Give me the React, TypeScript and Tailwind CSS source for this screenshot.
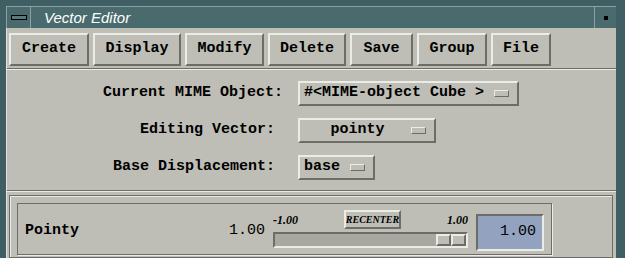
import React from "react";

const mono = { fontFamily: '"Liberation Mono", "Courier New", monospace' };
const serif = { fontFamily: '"Liberation Serif", "Times New Roman", serif' };

const raised =
  "border-2 border-t-[#ecece6] border-l-[#ecece6] border-b-[#6c6c68] border-r-[#6c6c68]";
const sunken =
  "border-2 border-t-[#6c6c68] border-l-[#6c6c68] border-b-[#ecece6] border-r-[#ecece6]";

function ToolButton({ label, width }: { label: string; width: string }) {
  return (
    <div
      className={`${raised} ${width} h-[33px] flex items-center justify-center text-[15px] font-bold text-black bg-[#bebeb6]`}
      style={mono}
    >
      {label}
    </div>
  );
}

function Indicator() {
  return <div className="w-[15px] h-[7px] border-[1.5px] border-t-[#ecece6] border-l-[#ecece6] border-b-[#6c6c68] border-r-[#6c6c68] bg-[#bebeb6]" />;
}

function OptionRow({
  label,
  value,
  width,
  labelPad,
  center,
}: {
  label: string;
  value: string;
  width: string;
  labelPad: string;
  center?: boolean;
}) {
  return (
    <div className="flex items-center">
      <div className={`w-[276px] text-right text-[15px] font-bold ${labelPad}`} style={mono}>
        {label}
      </div>
      <div
        className={`${raised} ${width} ml-[15px] h-[25px] flex items-center pl-[4px] pr-[8px] text-[15px] font-bold`}
        style={mono}
      >
        <span className={center ? "flex-1 text-center" : "flex-1"}>{value}</span>
        <Indicator />
      </div>
    </div>
  );
}

export default function App() {
  return (
    <div className="w-[625px] h-[258px] overflow-hidden bg-[#3f5f64] pl-[6px] pr-[9px] pt-[6px] flex flex-col">
      {/* title bar */}
      <div className="h-[22px] flex border-t border-l border-t-[#8aa0a2] border-l-[#8aa0a2] bg-[#4a6b6e]">
        <div className="w-[24px] flex items-center justify-center border-r border-r-[#8aa0a2]">
          <div className="w-[16px] h-[5px] border border-black bg-[#5a7a7c]" />
        </div>
        <div
          className="flex-1 pl-[13px] text-white italic text-[15px] leading-[21px]"
          style={{ fontFamily: '"Liberation Sans", Arial, sans-serif' }}
        >
          Vector Editor
        </div>
        <div className="w-[22px] flex items-center justify-center border-l border-l-[#8aa0a2]">
          <div className="w-[4px] h-[4px] bg-black" />
        </div>
      </div>

      {/* body */}
      <div className="flex-1 bg-[#bebeb6] flex flex-col border-l border-l-[#e4e4dc]">
        <div className="flex gap-[4px] pl-[2px] pt-[5px]">
          <ToolButton label="Create" width="w-[80px]" />
          <ToolButton label="Display" width="w-[88px]" />
          <ToolButton label="Modify" width="w-[79px]" />
          <ToolButton label="Delete" width="w-[78px]" />
          <ToolButton label="Save" width="w-[63px]" />
          <ToolButton label="Group" width="w-[70px]" />
          <ToolButton label="File" width="w-[60px]" />
        </div>
        <div className="mt-[2px] h-[2px] border-t border-b border-t-[#6c6c68] border-b-[#ecece6]" />

        <div className="flex flex-col gap-[12px] pt-[11px]">
          <OptionRow label="Current MIME Object:" value="#<MIME-object Cube >" width="w-[221px]" labelPad="pr-0" />
          <OptionRow label="Editing Vector:" value="pointy" width="w-[138px]" labelPad="pr-[8px]" center />
          <OptionRow label="Base Displacement:" value="base" width="w-[77px]" labelPad="pr-[8px]" />
        </div>

        <div className="mt-[10px] h-[2px] border-t border-b border-t-[#6c6c68] border-b-[#ecece6]" />

        {/* slider panel */}
        <div className="ml-[2px] mr-[3px] mt-[3px] flex-1 border border-[#6c6c68] shadow-[inset_1px_1px_0_#ecece6] pl-[7px] pt-[7px]">
          <div className="w-[535px] h-[52px] border border-[#6c6c68] shadow-[1px_1px_0_#ecece6] flex items-center pl-[7px]">
            <div className="w-[240px] flex items-center justify-between pt-[5px]">
              <span className="text-[15px] font-bold" style={mono}>Pointy</span>
              <span className="text-[15px]" style={mono}>1.00</span>
            </div>
            <div className="ml-[8px] w-[195px] flex flex-col">
              <div className="flex items-end justify-between h-[22px]">
                <span className="text-[12px] font-bold italic leading-none mb-[6px]" style={serif}>-1.00</span>
                <div
                  className={`${raised} h-[19px] w-[57px] flex items-center justify-center text-[10px] font-bold italic leading-none mb-[3px]`}
                  style={serif}
                >
                  RECENTER
                </div>
                <span className="text-[12px] font-bold italic leading-none mb-[6px]" style={serif}>1.00</span>
              </div>
              <div className={`${sunken} h-[16px] bg-[#a8a8a0] flex justify-end`}>
                <div className={`w-[15px] ${raised} bg-[#bebeb6]`} />
                <div className={`w-[15px] ${raised} bg-[#bebeb6]`} />
              </div>
            </div>
            <div
              className={`${sunken} ml-[8px] w-[68px] h-[37px] mt-[7px] bg-[#93a3bf] flex items-center justify-end pr-[6px] text-[15px]`}
              style={mono}
            >
              1.00
            </div>
          </div>
        </div>
      </div>
    </div>
  );
}
